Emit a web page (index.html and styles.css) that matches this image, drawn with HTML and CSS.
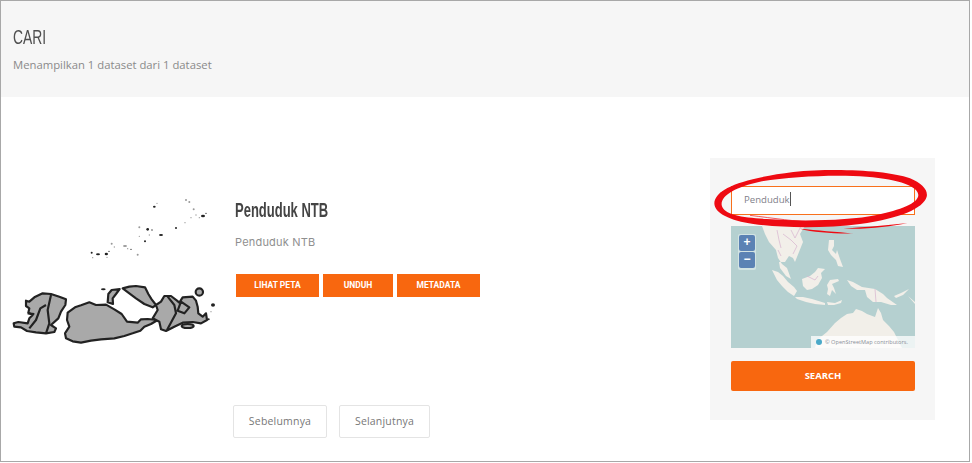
FILE: index.html
```html
<!DOCTYPE html>
<html lang="id">
<head>
<meta charset="utf-8">
<title>Cari</title>
<link rel="stylesheet" href="styles.css">
</head>
<body>
<div class="frame">
  <header class="head">
    <h1 class="head-title">CARI</h1>
    <p class="head-sub">Menampilkan 1 dataset dari 1 dataset</p>
  </header>
  <main class="main">
    <section class="results">
      <article class="result">
        <svg class="thumb" viewBox="0 0 690 570" aria-hidden="true">
          <g class="isl">
            <path d="M75 392L85 395 100 382 125 370 150 372 175 380 195 388 193 405 180 425 172 445 150 465 165 475 160 486 135 490 105 487 78 483 60 472 40 470 38 460 52 456 80 460 85 445 95 435 82 428 85 415 75 408Z"/>
            <path d="M200 428L222 412 240 406 265 397 285 405 315 404 340 418 362 432 378 455 410 458 420 448 440 447 470 450 450 462 430 470 418 482 395 490 370 498 340 505 300 508 270 512 240 518 215 514 195 505 192 490 205 470 198 450Z"/>
            <path d="M320 397L322 372 332 360 356 357 345 372 335 385 336 402Z"/>
            <path d="M365 355L385 350 405 348 432 352 442 372 452 388 465 405 455 412 430 402 405 385 385 370Z"/>
            <path d="M490 378L510 378 528 392 535 398 545 382 575 380 585 392 590 410 592 430 605 440 615 430 618 450 600 460 575 456 545 458 520 470 495 483 480 478 475 455 455 445 470 420 465 405 480 395Z"/>
            <circle cx="595" cy="366" r="11"/>
            <ellipse cx="560" cy="468" rx="18" ry="6"/>
            <path d="M150 375L140 420 145 460 135 490M135 405L118 415 105 450 85 475M80 430L100 432M500 380L520 405 525 430 498 480M530 422L540 395 565 412 550 430Z" fill="none"/>
          </g>
          <g class="dots">
            <ellipse cx="460" cy="110" rx="4" ry="3"/><circle cx="440" cy="178" r="4"/><circle cx="453" cy="180" r="2"/><ellipse cx="480" cy="195" rx="6" ry="3"/><circle cx="432" cy="214" r="3"/><circle cx="525" cy="174" r="3"/><ellipse cx="606" cy="138" rx="6" ry="4"/><circle cx="615" cy="130" r="2"/><circle cx="272" cy="248" r="3"/><ellipse cx="291" cy="253" rx="6" ry="3"/><ellipse cx="316" cy="252" rx="5" ry="4"/><circle cx="324" cy="244" r="2"/><circle cx="390" cy="238" r="2"/><ellipse cx="307" cy="358" rx="7" ry="3"/><ellipse cx="636" cy="405" rx="6" ry="5"/><circle cx="623" cy="448" r="3"/>
          </g>
          <g class="dots faint">
            <circle cx="468" cy="100" r="2"/><circle cx="555" cy="90" r="3"/><circle cx="565" cy="96" r="3"/><circle cx="578" cy="118" r="3"/><circle cx="585" cy="135" r="2"/><circle cx="570" cy="143" r="2"/><circle cx="552" cy="158" r="2"/><circle cx="415" cy="172" r="3"/><circle cx="415" cy="199" r="2"/><circle cx="445" cy="195" r="2"/><circle cx="332" cy="221" r="3"/><circle cx="340" cy="231" r="2"/><ellipse cx="372" cy="228" rx="6" ry="3"/><circle cx="380" cy="236" r="2"/><circle cx="410" cy="254" r="3"/><circle cx="318" cy="262" r="2"/><circle cx="275" cy="263" r="2"/><circle cx="595" cy="143" r="2"/><circle cx="630" cy="425" r="2"/>
          </g>
        </svg>
        <div class="info">
          <h2 class="info-title">Penduduk NTB</h2>
          <p class="info-desc">Penduduk NTB</p>
          <div class="actions">
            <a class="action action-map">LIHAT PETA</a>
            <a class="action action-get">UNDUH</a>
            <a class="action action-meta">METADATA</a>
          </div>
        </div>
      </article>
      <nav class="pager">
        <a class="pager-btn pager-prev">Sebelumnya</a>
        <a class="pager-btn pager-next">Selanjutnya</a>
      </nav>
    </section>
    <aside class="side">
      <div class="search-input">Penduduk<span class="caret"></span></div>
      <div class="map">
        <svg class="map-art" viewBox="0 0 184 122" aria-hidden="true">
          <rect width="184" height="122" fill="#b5d0d0"/>
          <g fill="#f2efe9">
            <path d="M31 0L34 8 38 16 45 24 47 32 51 38 56 42 60 53 55 50 49 42 48 36 52 36 54 36 58 30 62 32 64 36 68 26 72 16 69 8 72 3 74 0Z"/>
            <path d="M41 44L47 46 52 50 57 56 63 61 66 65 63 70 57 66 51 60 46 54Z"/>
            <path d="M64 71L72 71 81 73 94 77 94 79 84 78 75 76 66 73Z"/>
            <path d="M96 76L104 77 111 74 110 77 103 79 97 79Z"/>
            <path d="M71 53L79 50 84 46 87 42 94 43 90 47 91 52 87 59 81 63 76 64 72 60Z"/>
            <path d="M96 59L99 54 107 53 108 55 101 58 103 62 105 68 101 64 99 70 96 68 97 63Z"/>
            <path d="M98 14L103 14 103 20 101 24 105 28 106 24 109 33 112 41 107 40 105 34 100 29 97 24Z"/>
            <path d="M116 54L122 56 131 61 144 63 152 68 156 72 166 79 160 79 150 76 142 76 136 71 134 64 126 64 120 60Z"/>
            <path d="M163 70L170 67 178 63 172 69 165 72ZM177 70L184 76 184 78Z"/>
            <path d="M84 122L86 114 96 106 104 97 110 92 116 88 122 87 125 83 131 85 136 88 144 91 147 82 150 87 152 94 158 100 163 106 166 112 171 122Z"/>
          </g>
          <path class="map-border" d="M46 4L48 14 50 22M52 8L60 14 66 20 62 28M60 4L64 12M76 50L84 54 87 50M144 63L145 76M50 30L47 24M70 0L64 12"/>
        </svg>
        <div class="zoom-box">
          <span class="zoom-btn">+</span>
          <span class="zoom-btn">−</span>
        </div>
        <div class="attr"><span class="attr-dot"></span>© OpenStreetMap contributors.</div>
      </div>
      <a class="search-btn">SEARCH</a>
    </aside>
  </main>
  <svg class="scribble" viewBox="0 0 750 300" aria-hidden="true">
    <path class="scribble-ring" d="M43 160C45 115 130 85 280 66C400 54 560 60 630 85C665 100 685 120 680 140C670 175 600 205 480 222C380 235 250 235 160 222C90 212 43 190 43 160ZM65 165C70 195 130 203 200 207C300 215 450 212 530 195C600 180 655 160 655 135C655 110 600 88 500 80C400 73 270 80 180 95C110 110 62 135 65 165Z"/>
    <path class="scribble-tail" d="M300 236C350 241 410 246 462 250C400 251 340 247 300 236ZM430 236C500 232 570 224 622 220C570 230 500 239 430 236Z"/>
    <path class="scribble-thin" d="M150 196C220 205 290 214 345 218M60 130C120 95 210 78 300 68"/>
  </svg>
</div>
</body>
</html>
```
FILE: styles.css
```css
* { box-sizing: border-box; }
html, body { margin: 0; padding: 0; background: #fff; }
a { display: block; }
.frame {
  position: relative;
  width: 970px;
  height: 462px;
  border: 1px solid #a8a8a8;
  overflow: hidden;
  background: #fff;
  font-family: "Open Sans", "Liberation Sans", sans-serif;
}
.head {
  height: 96px;
  background: #f6f6f6;
  padding: 22px 12px 0;
}
.head-title {
  margin: 0;
  font-family: "Liberation Sans", sans-serif;
  font-weight: 400;
  font-size: 21px;
  line-height: 28px;
  color: #4f4f4f;
  transform: scaleX(.66);
  transform-origin: left center;
}
.head-sub {
  margin: 5px 0 0;
  font-size: 11.3px;
  line-height: 18px;
  color: #8a8a8a;
}
.main {
  display: flex;
  justify-content: space-between;
  padding: 61px 34px 0 0;
}
.results { width: 500px; padding-top: 12px; }
.result { display: flex; height: 190px; }
.thumb { width: 230px; height: 190px; flex: none; filter: blur(.35px); }
.isl { fill: #a9a9a9; stroke: #222; stroke-width: 6.5; stroke-linejoin: round; }
.dots { fill: #222; }
.faint { fill: #999; }
.info { padding: 27px 0 0 4px; }
.info-title {
  margin: 0;
  font-family: "Liberation Sans", sans-serif;
  font-weight: 700;
  font-size: 20px;
  line-height: 26px;
  color: #444;
  transform: scaleX(.65);
  transform-origin: left center;
}
.info-desc {
  margin: 11px 0 0;
  font-family: "Inter", "Open Sans", sans-serif;
  font-size: 11px;
  line-height: 16px;
  letter-spacing: .2px;
  color: #8f8f8f;
}
.actions { display: flex; gap: 4px; margin: 24px 0 0 1px; }
.action {
  height: 23px;
  background: #f8670f;
  color: #fff;
  font-family: "Roboto", "Liberation Sans", sans-serif;
  font-weight: 700;
  font-size: 8.5px;
  line-height: 23px;
  text-align: center;
}
.action-map { width: 83px; }
.action-get { width: 70px; }
.action-meta { width: 83px; }
.pager { display: flex; gap: 12px; margin: 45px 0 0 232px; }
.pager-btn {
  height: 33px;
  border: 1px solid #e4e4e4;
  border-radius: 2px;
  font-size: 10.5px;
  line-height: 31px;
  text-align: center;
  letter-spacing: .2px;
  color: #777;
  background: #fff;
}
.pager-prev { width: 94px; }
.pager-next { width: 91px; }
.side {
  width: 225px;
  height: 262px;
  background: #f6f6f6;
  padding: 28px 20px 0 21px;
}
.search-input {
  height: 29px;
  border: 1px solid #f8701c;
  background: #fff;
  padding-left: 12px;
  font-size: 9.6px;
  line-height: 26px;
  color: #7f7f8a;
}
.caret {
  display: inline-block;
  width: 1px;
  height: 14px;
  background: #555;
  vertical-align: -3px;
}
.map { position: relative; height: 122px; margin-top: 11px; overflow: hidden; }
.map-art { display: block; width: 184px; height: 122px; filter: blur(.3px); }
.map-border { fill: none; stroke: #d7b3cf; stroke-width: .7; }
.zoom-box {
  position: absolute;
  left: 7px;
  top: 8px;
  width: 18px;
  padding: 1px;
  background: rgba(255,255,255,.4);
  border-radius: 2px;
}
.zoom-btn {
  display: block;
  height: 16px;
  margin-bottom: 1px;
  background: #5b82b4;
  border-radius: 2px;
  color: #fff;
  font-family: "Liberation Sans", sans-serif;
  font-weight: 700;
  font-size: 12px;
  line-height: 15px;
  text-align: center;
}
.attr {
  position: absolute;
  right: 0;
  bottom: 0;
  width: 104px;
  height: 12px;
  padding: 2px 0 0 5px;
  background: rgba(255,255,255,.75);
  font-size: 5.6px;
  line-height: 9px;
  white-space: nowrap;
  color: #8a8f98;
}
.attr-dot {
  display: inline-block;
  width: 6px;
  height: 6px;
  margin-right: 3px;
  border-radius: 50%;
  background: #4aa9c9;
  vertical-align: -1px;
}
.search-btn {
  height: 30px;
  margin-top: 13px;
  border-radius: 2px;
  background: #f8670f;
  color: #fff;
  font-size: 9.5px;
  font-weight: 700;
  line-height: 30px;
  text-align: center;
}
.scribble {
  position: absolute;
  left: 699px;
  top: 149px;
  width: 250px;
  height: 100px;
}
.scribble-ring { fill: #ee0a12; fill-rule: evenodd; }
.scribble-tail { fill: #ee0a12; }
.scribble-thin { fill: none; stroke: #ee0a12; stroke-width: 2; }
```
